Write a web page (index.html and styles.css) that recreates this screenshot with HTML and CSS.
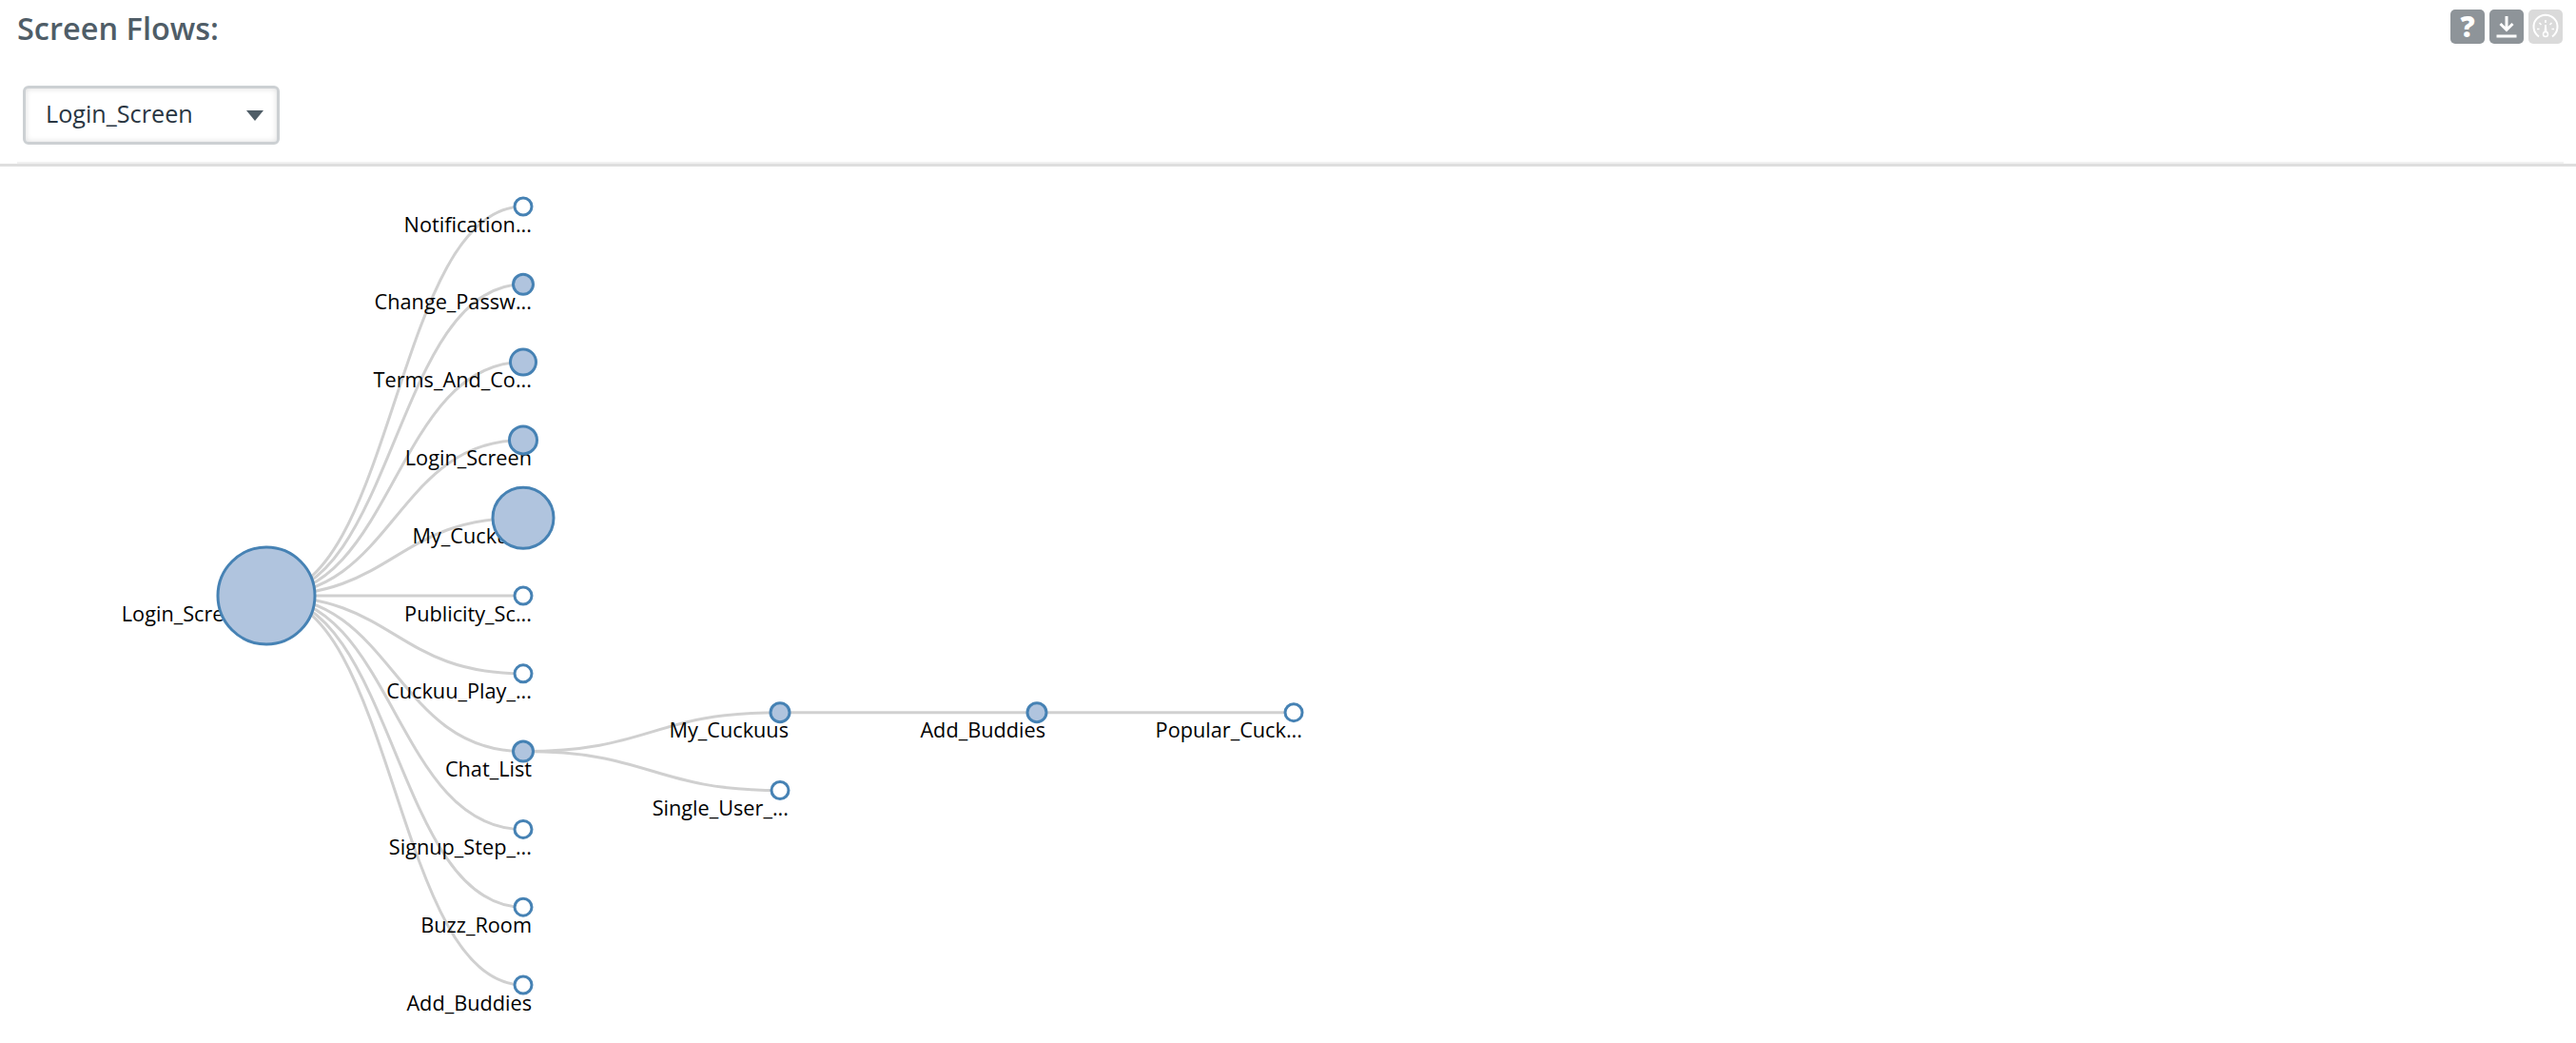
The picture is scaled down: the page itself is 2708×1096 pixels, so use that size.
FILE: index.html
```html
<!DOCTYPE html>
<html lang="en">
<head>
<meta charset="utf-8">
<title>Screen Flows</title>
<link rel="stylesheet" href="styles.css">
</head>
<body>
<header class="head">
  <h1 class="title">Screen Flows:</h1>
  <div class="tools">
    <button class="tool" type="button"><span class="tool-q">?</span></button>
    <button class="tool" type="button">
      <svg class="tool-icon" viewBox="0 0 36 36"><path d="M18 7v14M11.500 15l6.500 6.500 6.500-6.500M7.500 28h21" fill="none" stroke="#fff" stroke-width="3"/></svg>
    </button>
    <button class="tool tool-off" type="button">
      <svg class="tool-icon" viewBox="0 0 36 36"><path d="M11 28.500a12.500 12.500 0 1 1 14 0" fill="none" stroke="#fff" stroke-width="2"/><path d="M18 11v3M11.500 14l2 2M24.500 14l-2 2M9 20.500h2.500M27 20.500h-2.500" stroke="#fff" stroke-width="1.600"/><path d="M17.200 16h1.600l.7 8h-3z" fill="#fff"/><circle cx="18" cy="26" r="2.500" fill="none" stroke="#fff" stroke-width="1.500"/></svg>
    </button>
  </div>
</header>
<div class="picker">
  <div class="select">
    <span class="select-value">Login_Screen</span>
    <span class="select-caret"></span>
  </div>
</div>
<div class="rule"></div>
<svg class="graph" viewBox="0 176 2708 920" width="2708" height="920">
  <g class="links">
    <path d="M280 627C415 627 415 218 550 218"/>
    <path d="M280 627C415 627 415 299.800 550 299.800"/>
    <path d="M280 627C415 627 415 381.600 550 381.600"/>
    <path d="M280 627C415 627 415 463.400 550 463.400"/>
    <path d="M280 627C415 627 415 545.200 550 545.200"/>
    <path d="M280 627C415 627 415 627 550 627"/>
    <path d="M280 627C415 627 415 708.800 550 708.800"/>
    <path d="M280 627C415 627 415 790.600 550 790.600"/>
    <path d="M280 627C415 627 415 872.400 550 872.400"/>
    <path d="M280 627C415 627 415 954.200 550 954.200"/>
    <path d="M280 627C415 627 415 1036 550 1036"/>
    <path d="M550 790.600C685 790.600 685 749.700 820 749.700"/>
    <path d="M550 790.600C685 790.600 685 831.500 820 831.500"/>
    <path d="M820 749.700C955 749.700 955 749.700 1090 749.700"/>
    <path d="M1090 749.700C1225 749.700 1225 749.700 1360 749.700"/>
  </g>
  <g class="labels">
    <text x="559" y="244.500">Notification...</text>
    <text x="559" y="326.300">Change_Passw...</text>
    <text x="559" y="408.100">Terms_And_Co...</text>
    <text x="559" y="489.900">Login_Screen</text>
    <text x="559" y="571.700">My_Cuckuus</text>
    <text x="559" y="653.500">Publicity_Sc...</text>
    <text x="559" y="735.300">Cuckuu_Play_...</text>
    <text x="559" y="817.100">Chat_List</text>
    <text x="559" y="898.900">Signup_Step_...</text>
    <text x="559" y="980.700">Buzz_Room</text>
    <text x="559" y="1062.500">Add_Buddies</text>
    <text x="261" y="653.500">Login_Screen</text>
    <text x="829" y="776.200">My_Cuckuus</text>
    <text x="829" y="858">Single_User_...</text>
    <text x="1099" y="776.200">Add_Buddies</text>
    <text x="1369" y="776.200">Popular_Cuck...</text>
  </g>
  <g class="nodes">
    <circle class="node-open" cx="550" cy="218" r="9"/>
    <circle class="node-full" cx="550" cy="299.800" r="10.500"/>
    <circle class="node-full" cx="550" cy="381.600" r="13.500"/>
    <circle class="node-full" cx="550" cy="463.400" r="14.500"/>
    <circle class="node-full" cx="550" cy="545.200" r="32"/>
    <circle class="node-open" cx="550" cy="627" r="9"/>
    <circle class="node-open" cx="550" cy="708.800" r="9"/>
    <circle class="node-full" cx="550" cy="790.600" r="10.500"/>
    <circle class="node-open" cx="550" cy="872.400" r="9"/>
    <circle class="node-open" cx="550" cy="954.200" r="9"/>
    <circle class="node-open" cx="550" cy="1036" r="9"/>
    <circle class="node-full" cx="280" cy="627" r="51"/>
    <circle class="node-full" cx="820" cy="749.700" r="10"/>
    <circle class="node-open" cx="820" cy="831.500" r="9"/>
    <circle class="node-full" cx="1090" cy="749.700" r="10"/>
    <circle class="node-open" cx="1360" cy="749.700" r="9"/>
  </g>
</svg>
</body>
</html>
```
FILE: styles.css
```css
html, body {
  margin: 0;
  padding: 0;
  background: #fff;
}

body {
  width: 2708px;
  height: 1096px;
  overflow: hidden;
  font-family: "Open Sans", sans-serif;
}

.head {
  display: flex;
  justify-content: space-between;
  align-items: flex-start;
  height: 90px;
  padding: 10px 14px 0 18px;
  box-sizing: border-box;
}

.title {
  margin: 0;
  font-size: 32.500px;
  line-height: 40px;
  font-weight: 600;
  color: #4f5d67;
}

.tools {
  display: flex;
  gap: 5px;
}

.tool {
  width: 36px;
  height: 36px;
  padding: 0;
  border: 0;
  border-radius: 5px;
  background: #8e9499;
  display: flex;
  align-items: center;
  justify-content: center;
}

.tool-off {
  background: #dadada;
}

.tool-q {
  font-family: "Open Sans", sans-serif;
  font-size: 30px;
  line-height: 36px;
  font-weight: 800;
  color: #fff;
}

.tool-icon {
  width: 36px;
  height: 36px;
  display: block;
}

.picker {
  padding-left: 24px;
  height: 82px;
}

.select {
  width: 270px;
  height: 62px;
  box-sizing: border-box;
  border: 3px solid #ccd0d3;
  border-radius: 6px;
  box-shadow: inset 0 0 6px rgba(0, 0, 0, 0.14);
  display: flex;
  align-items: center;
  justify-content: space-between;
  padding: 0 14px 5px 21px;
}

.select-value {
  font-size: 25.200px;
  color: #2a3642;
}

.select-caret {
  width: 0;
  height: 0;
  margin-top: 5px;
  border-left: 9px solid transparent;
  border-right: 9px solid transparent;
  border-top: 11px solid #4f5d67;
}

.rule {
  height: 2px;
  margin: -2px 13px 0 18px;
  background: #f1f1f1;
}

.graph {
  display: block;
  box-shadow: 0 -3px 0 #dedede;
  margin-top: 3px;
}

.links path {
  fill: none;
  stroke: #d0d0d0;
  stroke-width: 3px;
}

.labels text {
  font-family: "Open Sans", sans-serif;
  font-size: 21.700px;
  text-anchor: end;
  fill: #000;
}

.node-open {
  fill: #fff;
  stroke: #4682b4;
  stroke-width: 3px;
}

.node-full {
  fill: #b0c4de;
  stroke: #4682b4;
  stroke-width: 3px;
}
```
